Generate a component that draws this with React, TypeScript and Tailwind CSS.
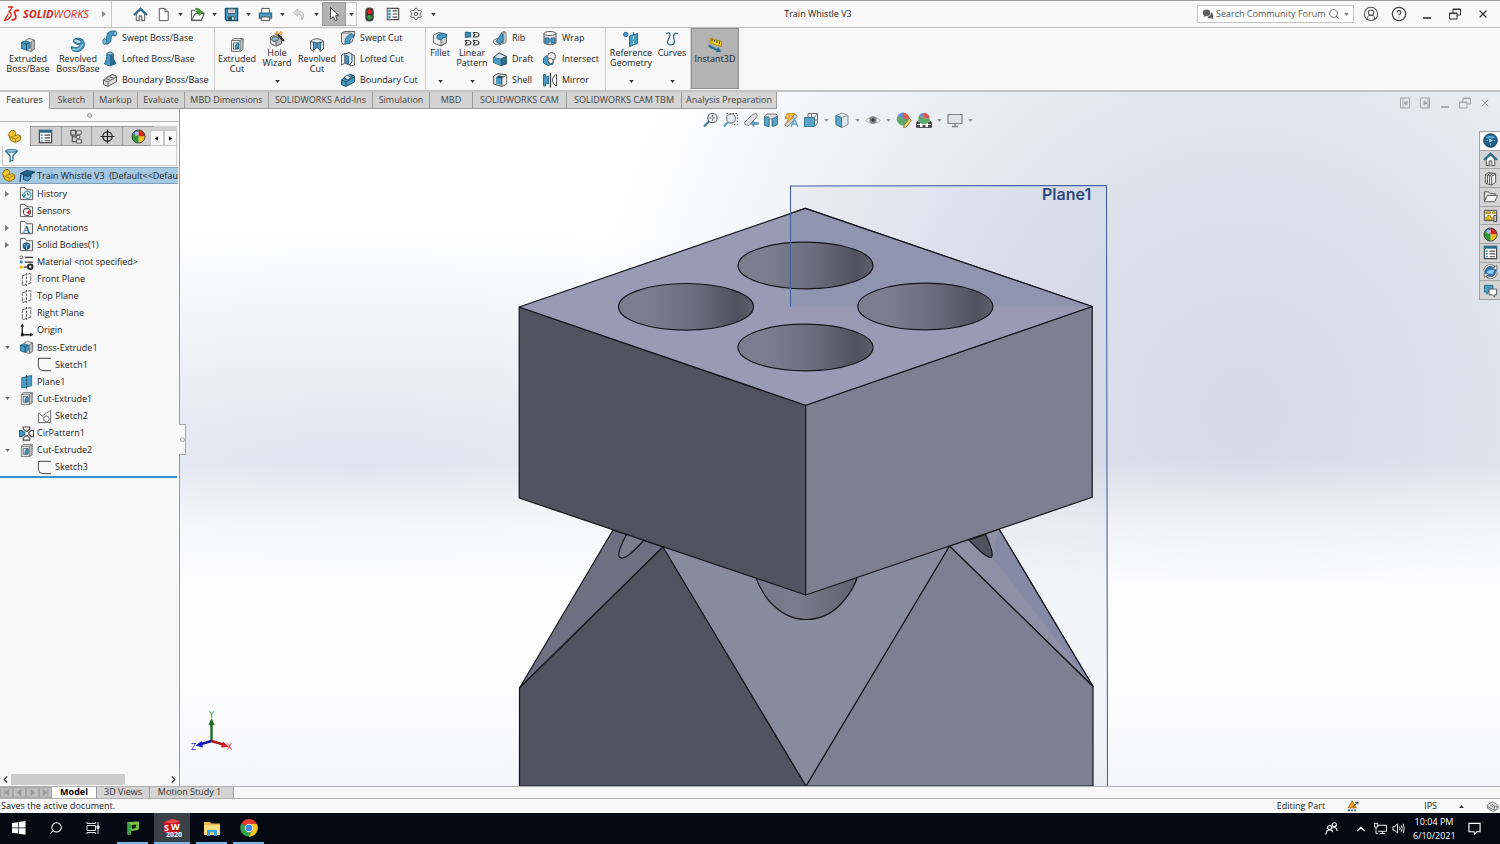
import type { ReactNode } from "react";
import { ChevronLeft, ChevronRight, ChevronUp, CircleHelp, CircleUserRound, Search, Settings, X } from "lucide-react";

const blue = "#4a9cc4";
const deep = "#2a6c8f";
const ink = "#4a4a4a";

/* 16x16 drawings shared by the ribbon, the tree and the toolbars */
const icons: Record<string, ReactNode> = {
  home: (
    <>
      <path d="M3.500 7.500V14.500H12.500V7.500L8 3Z" fill="#fff" stroke={ink} />
      <path d="M6.500 14.500V9.500H9.500V14.500" fill="#ddd" stroke={ink} />
      <path d="M1 8.500L8 2L15 8.500" fill="none" stroke={deep} strokeWidth="2.400" />
    </>
  ),
  page: <path d="M3.500 1.500H9.500L13 5V14.500H3.500ZM9.500 1.500V5H13" fill="#fff" stroke="#555" />,
  open: (
    <>
      <path d="M1.500 14V3.500H5L6.500 5H12V7L15 6L12 14.500H1.500Z" fill="#eee" stroke={ink} />
      <path d="M2 14L5.500 7H15L12 14Z" fill="#fff" stroke={ink} />
      <path d="M6 1.500Q11 1 11.500 5H14L10.300 9L7 5H9Q9 3 6 3Z" fill="#43a52b" stroke="#2b7a1b" strokeWidth=".6" />
    </>
  ),
  save: (
    <>
      <path d="M1.500 1.500H14.500V14.500H3L1.500 13Z" fill={blue} stroke="#1d4f69" strokeWidth="1.400" />
      <path d="M4 2H12V7H4Z" fill="#f0f4f6" stroke="#456" />
      <path d="M5.500 3.500H10.500M5.500 5.300H10.500" stroke="#888" strokeWidth=".8" />
      <path d="M4.500 10H11.500V14H4.500Z" fill="#355" />
      <path d="M8.500 11H10.500V13.500H8.500Z" fill="#fff" />
    </>
  ),
  print: (
    <>
      <path d="M4 7V1.500H12V7" fill="#fff" stroke={ink} />
      <path d="M1.500 6.500H14.500V12H1.500Z" fill={blue} stroke={deep} strokeWidth="1.300" />
      <path d="M3.500 10.500H12.500V14.500H3.500Z" fill="#eee" stroke={ink} />
    </>
  ),
  undo: <path d="M6 2L2 6L6 10V7.500Q11 6.500 10.500 14Q16 5 6 4.500Z" fill="#ddd" stroke="#b4b4b4" />,
  cursor: <path d="M4.500 1.500V13L7.300 10.500L9.300 14.800L11.300 14L9.500 9.700H13Z" fill="#fff" stroke="#444" />,
  traffic: (
    <>
      <rect x="4" y="1" width="8" height="14" rx="3" fill="#333" stroke="#555" />
      <circle cx="8" cy="5" r="2.600" fill="#e5231b" />
      <circle cx="8" cy="11" r="2.600" fill="#2f9e37" />
    </>
  ),
  list: (
    <>
      <path d="M1.500 1.500H14.500V14.500H1.500Z" fill="#fff" stroke={ink} strokeWidth="1.300" />
      <path d="M2 2H6V14H2Z" fill="#b9d8e6" />
      <path d="M3 4.500H5M3 8H5M3 11.500H5" stroke={deep} strokeWidth="1.800" />
      <path d="M7.500 4.500H13M7.500 8H13M7.500 11.500H13" stroke={ink} strokeWidth="1.300" />
    </>
  ),
  props: (
    <>
      <path d="M1.500 1.500H14.500V14.500H1.500Z" fill="#fff" stroke={ink} strokeWidth="1.300" />
      <path d="M1 1H15V4H1Z" fill={deep} />
      <path d="M3 6.500H5M3 9.500H5M3 12.500H5" stroke={blue} strokeWidth="1.800" />
      <path d="M7 6.500H13M7 9.500H13M7 12.500H13" stroke={ink} strokeWidth="1.200" />
    </>
  ),
  extrude: (
    <>
      <path d="M6 3L9 1.500L14.500 3V12L11 14.500L6 13Z" fill="#eee" stroke="#777" />
      <path d="M11 5V14L14.500 12V3Z" fill="#bbb" stroke="#777" />
      <path d="M1.500 5.500L5 4L10 5.500V11L6.500 13L1.500 11.500Z" fill={blue} stroke={deep} />
      <path d="M1.500 5.500L6.500 7L10 5.500M6.500 7V13" fill="none" stroke="#1d516b" />
    </>
  ),
  revolve: (
    <>
      <path d="M4 2.500Q8 -.5 12.500 2.500Q16 7 13 11.500Q9 16 3.500 14Q.5 12.500 1.500 9.500Q7 12 9.500 9Q9.500 7 6 7Q2 5.500 4 2.500Z" fill={blue} stroke={deep} />
      <ellipse cx="7.500" cy="4.300" rx="3.800" ry="1.900" fill="#b8dceb" stroke={deep} transform="rotate(15 7.500 4.300)" />
      <path d="M2.500 12Q9 14.500 12.500 7.500" stroke="#b8dceb" fill="none" />
    </>
  ),
  sweep: (
    <>
      <path d="M2.500 11.500Q7 13 7 7.500Q7 2.500 13 3.500" fill="none" stroke={deep} strokeWidth="5.500" />
      <path d="M2.500 11.500Q7 13 7 7.500Q7 2.500 13 3.500" fill="none" stroke={blue} strokeWidth="3.800" />
      <ellipse cx="2.600" cy="11.500" rx="1.800" ry="2.800" fill="#8ac4de" stroke={deep} />
      <ellipse cx="13" cy="3.500" rx="1.600" ry="2.500" fill="#8ac4de" stroke={deep} />
    </>
  ),
  loft: (
    <>
      <path d="M5 2.500L4.500 8L2.500 13L8 15L14 12.500L11.500 8L11 2.500Z" fill={blue} stroke={deep} />
      <path d="M8 4V15L14 12.500L11.500 8L11 2.500Z" fill={deep} />
      <ellipse cx="8" cy="2.600" rx="3" ry="1.400" fill="#a8d3e5" stroke={deep} />
    </>
  ),
  boundary: (
    <>
      <path d="M1.500 8L10 2.500L14.500 4V9.500L6 14.500L1.500 12.500Z" fill="#ddd" stroke="#555" />
      <path d="M1.500 8L6 10L14.500 4.500M6 10V14.500M4 6.500L9 8.500M7 4.500L12 6.500" fill="none" stroke="#666" />
      <path d="M3 7.500Q7 2 9 5.500T14 4.500" fill="none" stroke="#777" />
    </>
  ),
  cut: (
    <>
      <path d="M2.500 3.500L5 1.500H14L13 13L10.500 14.500H2.500Z" fill="#e8e8e8" stroke="#777" />
      <path d="M11 3.500V14.500L14 12.500V1.500ZM2.500 3.500H11" fill="#bbb" stroke="#777" />
      <path d="M4.500 6H9.500V12H4.500Z" fill="#fff" stroke="#567" />
      <path d="M6.500 8L9.500 6V11L6.500 12Z" fill={blue} stroke={deep} />
    </>
  ),
  wizard: (
    <>
      <path d="M1.500 6L7 3.500L12.500 5.500V12.500L7 15.200L1.500 12.500Z" fill="#e2e2e2" stroke="#666" />
      <path d="M7 8V15L12.500 12.500V5.500Z" fill="#bbb" stroke="#666" />
      <ellipse cx="6" cy="8" rx="3.400" ry="2.400" fill="#89b7ce" stroke="#555" />
      <path d="M8 3L15 10" stroke="#222" strokeWidth="1.800" />
      <path d="M8 0V5M5.500 2.500H10.500M12 0V4M10 2H14" stroke="#f0902c" strokeWidth="1.200" />
    </>
  ),
  revcut: (
    <>
      <path d="M1.500 4Q8 -.5 14.500 4V12L11 14.500V9H5V14.500L1.500 12Z" fill="#e4e4e4" stroke="#666" />
      <path d="M4.500 5L8 6L11.500 5V13L8 10.500L4.500 13Z" fill={blue} stroke={deep} />
      <path d="M8 6V11M2 4.500L5 6M14 4.500L11 6" stroke="#456" />
    </>
  ),
  sweepcut: (
    <>
      <path d="M1.500 3L5 1.500H14.500V5L12 12L3 14.500L1.500 12Z" fill="#e4e4e4" stroke="#666" />
      <path d="M5 14Q4 6 12 3.500L14.500 6Q9 8 10 13.500Z" fill={blue} stroke={deep} />
      <path d="M2 3H11" stroke="#777" />
    </>
  ),
  loftcut: (
    <>
      <path d="M1.500 4L5 2V12L1.500 14ZM10 3L14.500 4.500V14L10 15Z" fill="#eee" stroke="#666" />
      <path d="M5 3L9 1.500L12 3V11L9 14L5 12Z" fill="#cfe1e9" stroke="#456" />
      <path d="M6 4L8.500 5.500V13L6 11.500Z" fill={blue} stroke={deep} />
    </>
  ),
  boundcut: (
    <>
      <path d="M1.500 8L10 2L14.500 4V10L6 14.500L1.500 12.500Z" fill={blue} stroke="#1f546e" />
      <path d="M1.500 8L6 10L14.500 4.500M6 10V14.500M4 6.500L9 8.500" fill="none" stroke="#1f4c63" />
      <path d="M4 6Q7 1 9 4.500L13 3.500L8 8Z" fill="#d6e6ed" stroke="#456" />
    </>
  ),
  fillet: (
    <>
      <path d="M1.500 4L7 1.500L14.500 3.500V11.500L9 15L1.500 12Z" fill="#eee" stroke="#666" />
      <path d="M9 8V15L14.500 11.500V5Z" fill="#ccc" stroke="#666" />
      <path d="M5 5Q7 2.500 10 2.300L14.500 3.500V6Q10 6 9 9L5 7.500Z" fill={blue} stroke={deep} />
    </>
  ),
  pattern: (
    <>
      <path d="M1.500 1.500H4V2.500L6.500 1.500V6L4 5V6H1.500Z" fill={blue} stroke={deep} strokeWidth="1.300" />
      <path d="M9.500 1.500H12Q15 2 15 3.700T12 6H9.500V5L11 3.700L9.500 2.500ZM1.500 9.500H4Q7 10 7 11.700T4 14H1.500V13L3 11.700L1.500 10.500ZM9.500 9.500H12Q15 10 15 11.700T12 14H9.500V13L11 11.700L9.500 10.500Z" fill="#fff" stroke="#444" strokeWidth="1.200" />
    </>
  ),
  rib: (
    <>
      <path d="M1.500 10L9 7V3L12 1.500V12L5 15L1.500 13Z" fill="#ddd" stroke="#777" />
      <path d="M4 11.500L9.500 3.500L11 4V11.500L7 13.500Z" fill={blue} stroke={deep} />
      <path d="M12 1.500L14 2.500V12.500L7 15" fill="none" stroke="#777" />
    </>
  ),
  draft: (
    <>
      <path d="M1.500 6.500L7 2L14.500 5.500V13L9 14.500L1.500 11.500Z" fill={deep} stroke="#355" />
      <path d="M1.500 6.500L7 2L14.500 5.500L8.500 8Z" fill="#d6e8f0" stroke="#456" />
      <path d="M1.500 6.500L8.500 8V14.500L1.500 11.500Z" fill={blue} />
    </>
  ),
  shell: (
    <>
      <path d="M1.500 4L6 1.500L14.500 3V12L10 14.500L1.500 12Z" fill="#ddd" stroke="#555" />
      <path d="M4 5.500L7 3.500L12.500 4.500V13L4 11Z" fill="#1d5470" />
      <path d="M4 5.500L9 6.500V13L4 11.500Z" fill={blue} />
      <path d="M10 6V14.500L14.500 12V3Z" fill="#eee" stroke="#777" />
    </>
  ),
  wrap: (
    <>
      <path d="M2 3.500V13Q8 16.500 14 13V3.500Z" fill="#e5e5e5" stroke="#555" />
      <ellipse cx="8" cy="3.500" rx="6" ry="2" fill="#fff" stroke="#555" />
      <path d="M3 8H7V13H3ZM9 8H13V13H9ZM7 10H9" fill={blue} stroke={deep} />
    </>
  ),
  intersect: (
    <>
      <path d="M1.500 7L5 4.500L11 7V13L6 14.500L1.500 12Z" fill={blue} stroke={deep} />
      <circle cx="9.500" cy="5.500" r="4" fill="#eee" stroke="#555" />
      <path d="M5.500 9L8 7L11 8.500V12L8 13Z" fill="#fff" stroke="#555" />
    </>
  ),
  mirror: (
    <>
      <path d="M1.500 2.500H3.500V5.500L6.500 4V12L3.500 10.500V14H1.500Z" fill={blue} stroke={deep} />
      <path d="M14.500 2.500L13 3L10.500 6.500V9.500L13 13.500L14.500 14Z" fill="#fff" stroke="#555" />
      <path d="M8.500 1V15.500" stroke="#333" strokeWidth="1.200" />
    </>
  ),
  geometry: (
    <>
      <circle cx="2.800" cy="3.500" r="2.200" fill={blue} stroke={deep} />
      <path d="M6.500 5L14.500 2.500V12.500L6.500 15.500Z" fill={blue} stroke={deep} />
      <path d="M10.500 1V15.500" stroke="#fff" strokeDasharray="3 1.500" />
      <path d="M10.500 1V4" stroke={ink} />
    </>
  ),
  curves: <path d="M2 2.500Q6 .5 6 4Q6 6 4.500 8Q2 12.500 5.500 13.700Q12 14.500 10 8Q8 1.500 14 2.500" fill="none" stroke={deep} strokeWidth="1.300" />,
  instant: (
    <>
      <path d="M3 1L14.500 4.500V9.500L3 6Z" fill="#f5cf2f" stroke="#a98a14" />
      <path d="M5 2V4.500M7.500 3V5M10 3.500V6M12.500 4.500V7" stroke="#333" />
      <path d="M1.500 8.500L10 13" stroke={deep} strokeWidth="2.200" />
      <path d="M9 15.500L14.500 14.500L11 10Z" fill={deep} />
    </>
  ),
  part: (
    <>
      <path d="M1.500 6L4 2L7.500 1.500L9.500 4L8.500 7L11.500 6L14.500 7.500V11.500L9 14.500L4 12Z" fill="#f5c52d" stroke="#8a6a10" />
      <path d="M4 12V9L1.500 6M4 9L8.500 7M9 14.500V10.500L14.500 7.500M4 9L9 10.500" fill="none" stroke="#a88218" />
    </>
  ),
  config: (
    <>
      <path d="M2 1.500H7V6.500H2ZM3.500 6.500V13.500H8M3.500 8.500H8" fill="none" stroke="#555" strokeWidth="1.300" />
      <path d="M8 2H13V5.500H8ZM8 7H11.500V10H8ZM8 11.500H13.500V15H8Z" fill="#eee" stroke="#555" />
    </>
  ),
  target: (
    <>
      <circle cx="8" cy="8" r="5" fill="none" stroke="#222" strokeWidth="1.300" />
      <path d="M8 .5V15.500M.5 8H15.500" stroke="#222" strokeWidth="1.300" />
    </>
  ),
  ball: (
    <>
      <path d="M8 8L2 4.500A7 7 0 0 1 8 1Z" fill="#2a5fc4" />
      <path d="M8 8V1A7 7 0 0 1 15 8Z" fill="#d9261c" />
      <path d="M8 8H15A7 7 0 0 1 8 15Z" fill="#f3c413" />
      <path d="M8 8V15A7 7 0 0 1 2 4.500Z" fill="#2b9a36" />
      <circle cx="8" cy="8" r="7" fill="none" stroke="#444" />
      <circle cx="6" cy="5" r="2.300" fill="#fff" opacity=".6" />
    </>
  ),
  filter: (
    <>
      <path d="M2 3.500L6.500 8.500V14.500L9.500 13V8.500L14 3.500Z" fill="#eee" stroke={deep} strokeWidth="1.300" />
      <ellipse cx="8" cy="3" rx="6.200" ry="1.500" fill="#9ccbe0" stroke={deep} />
    </>
  ),
  cap: (
    <>
      <path d="M1 5.500L8 2.500L16 4L9.500 8Z" fill="#24668a" stroke="#174660" />
      <path d="M4.500 7.500V11.500L8.500 13L12 10V6.500L9.500 8.500Z" fill={blue} stroke="#174660" />
      <path d="M2 6.500L1 14" stroke="#174660" strokeWidth="1.300" />
    </>
  ),
  history: (
    <>
      <path d="M1.500 14.500V1.500H6.500L8 4H14.500V14.500Z" fill="#f4f4f4" stroke="#555" />
      <circle cx="9" cy="9.500" r="3.700" fill="#fff" stroke={blue} strokeWidth="1.300" />
      <path d="M9 7V9.500H11M3 9L5 11.500L7 9" fill="none" stroke={deep} strokeWidth="1.200" />
    </>
  ),
  sensors: (
    <>
      <path d="M1.500 14.500V1.500H6.500L8 4H14.500V14.500Z" fill="#f4f4f4" stroke="#555" />
      <circle cx="8.500" cy="9.500" r="3.800" fill="#fff" stroke="#444" strokeWidth="1.200" />
      <path d="M7.500 10.500L11.500 7V12Z" fill="#d3331e" />
    </>
  ),
  annotations: (
    <>
      <path d="M1.500 14.500V1.500H6.500L8 4H14.500V14.500Z" fill="#f4f4f4" stroke="#555" />
      <text x="8" y="14" fontSize="11" fontWeight="700" textAnchor="middle" fill={deep} className="font-['Liberation_Serif',serif]">A</text>
    </>
  ),
  bodies: (
    <>
      <path d="M1.500 14.500V1.500H6.500L8 4H14.500V14.500Z" fill="#f4f4f4" stroke="#555" />
      <path d="M4.500 7.500L8 6L11.500 7.500V11.500L8 13.500L4.500 11.500Z" fill={deep} stroke="#174660" />
      <path d="M4.500 7.500L8 9L11.500 7.500M8 9V13" fill="none" stroke="#9ccbe0" strokeWidth=".8" />
    </>
  ),
  material: (
    <>
      <circle cx="2.500" cy="2.500" r="1.500" fill="#fff" stroke="#666" />
      <circle cx="2.500" cy="7.500" r="1.800" fill={blue} />
      <circle cx="2.500" cy="13" r="1.800" fill="#efb91c" />
      <path d="M6 2.500H15M6 7.500H15M5 13H9" stroke="#333" strokeWidth="1.400" />
      <circle cx="12" cy="12.500" r="2.400" fill="none" stroke="#222" strokeWidth="2" />
    </>
  ),
  plane: (
    <>
      <path d="M3.500 4L12.500 1.500V12L3.500 14.500Z" fill="none" stroke="#666" strokeDasharray="5 1" />
      <path d="M8 1V15" stroke="#555" strokeDasharray="2.500 1.500" />
    </>
  ),
  origin: (
    <>
      <path d="M3.500 3V12.500H13" fill="none" stroke="#222" strokeWidth="1.400" />
      <path d="M3.500 .5L1.500 4H5.500ZM15.500 12.500L12 10.500V14.500ZM2 11H5V14H2Z" fill="#222" />
    </>
  ),
  sketch: <path d="M15 1.500H1.500V9Q1.500 14.500 7 14.500H15" fill="none" stroke="#666" strokeWidth="1.200" />,
  sketchshape: (
    <>
      <path d="M1.500 14.500V4L5.500 7.500L14.500 1.500V14.500Z" fill="none" stroke="#666" />
      <circle cx="10" cy="10.500" r="3" fill="#f8f8f8" stroke="#666" />
    </>
  ),
  plane1: (
    <>
      <path d="M3 4L13.500 1.500V12.500L3 15Z" fill={blue} stroke={deep} />
      <path d="M8 1V15.500" stroke="#174660" strokeDasharray="3 1" />
    </>
  ),
  cirpattern: (
    <>
      <path d="M.5 5H3L6 7V9L3 11H.5Z" fill={blue} stroke={deep} strokeWidth="1.300" />
      <path d="M4.500 1H11.500V3L9 5.500H7L4.500 3ZM15.500 4.500V11.500H13.500L10.500 9V7L13.500 4.500ZM4.500 15V13L7 10.500H9L11.500 13V15Z" fill="#fff" stroke="#444" strokeWidth="1.200" />
    </>
  ),
  zoomfit: (
    <>
      <circle cx="9.500" cy="6" r="4.700" fill="#eef3f6" stroke="#666" strokeWidth="1.300" />
      <path d="M6 9.500L1 14.500" stroke={deep} strokeWidth="2.200" />
      <path d="M9.500 3V9M6.500 6H12.500" stroke="#555" strokeDasharray="2 1.500" />
    </>
  ),
  zoomarea: (
    <>
      <path d="M3.500 1.500H14.500V12.500H9" fill="none" stroke="#555" strokeDasharray="1.600 1.400" />
      <circle cx="8" cy="6.500" r="4.500" fill="#dfeaf0" stroke="#888" strokeWidth="1.300" />
      <path d="M5 10L1 14.500" stroke={blue} strokeWidth="2.200" />
    </>
  ),
  prevview: (
    <>
      <path d="M9 3L13 1L14.500 4L6 13.500L2 12.500L1.500 10.500Z" fill="#ddd" stroke="#777" />
      <path d="M7.500 11.500L11 8.500V10.500H15.500V12.500H11V14.500Z" fill={blue} stroke={deep} strokeWidth=".5" />
    </>
  ),
  section: (
    <>
      <path d="M1.500 4L4 2H13L14.500 3.500V12L11 14H9V7H6V14.500L1.500 13Z" fill="#ddd" stroke="#666" />
      <path d="M1.500 5H6V14.500L1.500 13.500ZM9.500 6.500L14.500 4.500V12.500L9.500 14.500Z" fill={blue} stroke={deep} />
    </>
  ),
  dynamic: (
    <>
      <path d="M12 2L14.500 4L5 14.500L1.500 13Z" fill="#ccc" stroke="#777" />
      <path d="M4 1.500H12L8.500 5H11L3 11L5.500 6.500H2Z" fill="#f5b041" stroke="#b9710f" strokeWidth=".7" />
      <path d="M8 15L11.500 7L15 15M9 12H14" fill="none" stroke={blue} strokeWidth="1.400" />
    </>
  ),
  orient: (
    <>
      <path d="M5 5V1.500H14.500V11L11.500 14.500" fill="#eee" stroke="#666" />
      <path d="M1.500 5.500H11.500V14.500H1.500Z" fill={blue} stroke={deep} />
      <path d="M11.500 5.500L14.500 1.500M8.500 1.500V5M11.500 8H14.500" stroke="#666" />
    </>
  ),
  display: (
    <>
      <path d="M2 3.500L8 1L14 3.500V12.500L8 15.500L2 12.500Z" fill="#d8e8ef" stroke="#888" />
      <path d="M2 3.500L7.500 5.500V15.200L2 12.500Z" fill={blue} stroke={deep} />
      <path d="M7.500 5.500L14 3.500" stroke="#888" />
    </>
  ),
  eye: (
    <>
      <path d="M.5 8.500Q8 1.500 15.500 8.500Q8 14 .5 8.500Z" fill="#f5f5f5" stroke="#aaa" />
      <circle cx="8" cy="8" r="3.700" fill="#777" />
      <circle cx="8" cy="8" r="1.700" fill="#222" />
    </>
  ),
  pencilball: (
    <>
      <path d="M7 7L1.500 4A6.500 6.500 0 0 1 7 .5Z" fill="#5b86c9" />
      <path d="M7 7V.5A6.500 6.500 0 0 1 13.500 7Z" fill="#d94b45" />
      <path d="M7 7V13.500A6.500 6.500 0 0 1 1.500 4ZM7 7H13.500A6.500 6.500 0 0 1 7 13.500Z" fill="#4ba255" />
      <path d="M8 13.500L13.500 6.500L15.500 8.500L10 15L7.500 15.500Z" fill="#f1cf58" stroke="#75612a" strokeWidth=".8" />
    </>
  ),
  scene: (
    <>
      <path d="M.5 15.500V10L4 8H12L15.500 10V15.500Z" fill="#fff" stroke="#444" />
      <path d="M1 13H4V15H1ZM6.500 13H9.500V15H6.500ZM12 13H15V15H12ZM1 10H4V12H1ZM12 10H15V12H12Z" fill="#333" />
      <path d="M8 6.500L3 3.500A5.800 5.800 0 0 1 8 .7Z" fill="#5b86c9" />
      <path d="M8 6.500V.7A5.800 5.800 0 0 1 13.800 6.500Z" fill="#d94b45" />
      <path d="M8 6.500H13.800A5.800 5.800 0 0 1 8 12.300A5.800 5.800 0 0 1 3 3.500Z" fill="#4ba255" />
    </>
  ),
  monitor: (
    <>
      <path d="M1 2.500H15V11.500H1Z" fill="#dfe4e8" stroke="#777" strokeWidth="1.200" />
      <path d="M8 11.500V14M5 14.500H11" stroke="#777" strokeWidth="1.300" />
    </>
  ),
  globe: (
    <>
      <circle cx="8" cy="8" r="7.300" fill="#1f5f8b" stroke="#173f5c" />
      <path d="M2.500 5Q8 .5 13.500 5Q8 7 2.500 5Z" fill="#5ba3cf" />
      <path d="M7 6.500L10 8L7 9.500ZM3.500 8H5M11.500 8H13M8 11V13" fill="#bfe0f2" stroke="#bfe0f2" strokeWidth=".8" />
    </>
  ),
  library: (
    <>
      <path d="M2.500 4L6 1.500L13.500 3V12L9 15L2.500 13Z" fill="#eee" stroke="#555" />
      <path d="M4.800 5V13.500M7 5.500V14.500M9.200 5.500V15M2.500 4L9.200 5.500L13.500 3M4.800 4.500L8.500 2M7 5L11 2.500" fill="none" stroke="#555" />
    </>
  ),
  openfolder: (
    <>
      <path d="M1.500 13.500V3H6L7.500 5H13V7" fill="#ddd" stroke="#555" />
      <path d="M1.500 13.500L4.500 7H15.500L12.500 13.500Z" fill="#fff" stroke="#555" />
    </>
  ),
  palette: (
    <>
      <path d="M1.500 2.500H14.500V13.500H1.500Z" fill="#fff" stroke="#444" />
      <path d="M3 4H8V6H3ZM10 4H13V6H10ZM5 8H8V10H10V12.500H3V10H5Z" fill="#f2bf16" stroke="#7d6207" strokeWidth=".7" />
      <path d="M11.500 8H14.500V14.500H11.500Z" fill="#ccc" stroke="#444" />
    </>
  ),
  recycle: (
    <>
      <circle cx="8" cy="8" r="6" fill="#2d78bd" stroke="#1a4c7c" />
      <path d="M4 8Q9 5 12 7L10 11Q7 9 5 11Z" fill="#8fcdf0" />
      <path d="M1.500 7Q3 1.500 8 1.500Q11 1.500 12.500 4M14.500 9Q13 14.500 8 14.500Q5 14.500 3.500 12" fill="none" stroke="#555" strokeWidth="2.600" />
      <path d="M1.500 7Q3 1.500 8 1.500Q11 1.500 12.500 4M14.500 9Q13 14.500 8 14.500Q5 14.500 3.500 12" fill="none" stroke="#eee" strokeWidth="1.200" />
      <path d="M10 5L15 6L14.500 1.500ZM6 11L1 10L1.500 14.500Z" fill="#eee" stroke="#555" strokeWidth=".8" />
    </>
  ),
  forum: (
    <>
      <path d="M1.500 2.500H10.500V9.500H6L4 12V9.500H1.500Z" fill={blue} stroke={deep} />
      <path d="M6.500 6.500H14.500V12.500H12.500V15L10 12.500H6.500Z" fill="#fff" stroke="#555" />
    </>
  ),
  chat: (
    <>
      <path d="M1 7Q1 2 6 2T11 6.500T6 10.500L2 12L3 10Q1 9 1 7Z" fill="#5f5f5f" />
      <path d="M12 5.500Q15.500 7 15 10L14.500 12L15.500 14.500L12 13.500Q8 14 7 11.500Q12 11 12 5.500Z" fill="#5f5f5f" />
    </>
  ),
  warn: (
    <>
      <path d="M7 1L12.500 10.500H1.500Z" fill="#f0a31c" stroke="#8a5a0a" />
      <path d="M8 9L14 3M11 3H14.500V6" fill="none" stroke="#222" strokeWidth="1.300" />
      <path d="M1 12.500H4V15H1ZM5.500 12.500H8V15H5.500ZM9.500 12.500H12V15H9.500Z" fill={deep} />
    </>
  ),
  tag: (
    <>
      <path d="M1.500 6L8 2L14.500 6.500L15 10L9 14.500L2 10Z" fill="#ddd" stroke="#666" />
      <path d="M5 6L9 9M7 5L11 8M2 8L9 12L14.500 8" fill="none" stroke="#666" />
      <circle cx="12" cy="10" r="2" fill="#eee" stroke="#666" />
    </>
  ),
};

function Icon({ name, className = "size-4" }: { name: string; className?: string }) {
  return (
    <svg viewBox="0 0 16 16" className={`shrink-0 ${className}`} aria-hidden="true">
      {icons[name]}
    </svg>
  );
}

function Caret({ className = "text-[#333]" }: { className?: string }) {
  return (
    <svg viewBox="0 0 6 4" className={`h-[3px] w-[5px] shrink-0 ${className}`} aria-hidden="true">
      <path d="M0 0H6L3 4Z" fill="currentColor" />
    </svg>
  );
}

function DropButton({ label, className = "w-3" }: { label: string; className?: string }) {
  return (
    <button aria-label={label} className={`flex h-5 items-center justify-center ${className}`}>
      <Caret />
    </button>
  );
}

const quickTools = [
  { name: "page", label: "New" },
  { name: "open", label: "Open" },
  { name: "save", label: "Save" },
  { name: "print", label: "Print" },
  { name: "undo", label: "Undo" },
];

function TitleBar() {
  return (
    <header className="flex h-7 items-center border-y border-t-[#9d9d9d] border-b-[#bdbdbd] bg-[#f8f8f8]">
      <div className="flex h-full w-28 items-center border-r border-[#c8c8c8] pl-1">
        <svg viewBox="0 0 16 16" className="h-4 w-4 text-[#da291c]" fill="none" stroke="currentColor" strokeWidth="1.300" aria-hidden="true">
          <path d="M4 1H8.500L5 6Q8.500 7 6.500 10.500Q4.500 14 .5 14.500L4.500 7.500" />
          <path d="M15 4.500H12Q9.500 5.500 11 8T11.500 12.500Q10.500 14 7.500 14" strokeWidth="1.800" />
        </svg>
        <span className="pl-[3px] text-[11px] text-[#da291c] italic">
          <b>SOLID</b>WORKS
        </span>
        <span className="ml-auto pr-[5px]">
          <svg viewBox="0 0 4 6" className="h-[6px] w-1" aria-hidden="true">
            <path d="M0 0L4 3L0 6Z" fill="#888" />
          </svg>
        </span>
      </div>
      <nav className="flex items-center pl-4" aria-label="Quick access">
        <button aria-label="Home" className="flex w-6 justify-center">
          <Icon name="home" className="size-[15px]" />
        </button>
        {quickTools.map((tool) => (
          <div key={tool.name} className="flex items-center">
            <button aria-label={tool.label} className="flex w-[22px] justify-center">
              <Icon name={tool.name} className="size-[15px]" />
            </button>
            <DropButton label={`${tool.label} options`} />
          </div>
        ))}
        <button aria-label="Select" className="flex h-6 w-6 items-center justify-center border border-[#999] bg-[#b3b3b3]">
          <Icon name="cursor" />
        </button>
        <DropButton label="Select options" className="h-6 w-[11px] border border-l-0 border-[#c5c5c5]" />
        <button aria-label="Rebuild" className="flex w-6 justify-center">
          <Icon name="traffic" className="size-[15px]" />
        </button>
        <button aria-label="File properties" className="flex w-6 justify-center">
          <Icon name="list" className="size-[14px]" />
        </button>
        <button aria-label="Options" className="flex w-[22px] justify-center text-[#555]">
          <Settings size={14} strokeWidth={1.6} />
        </button>
        <DropButton label="Options menu" />
      </nav>
      <h1 className="flex-1 text-center text-[9px] text-[#222]">Train Whistle V3</h1>
      <div className="flex items-center">
        <div className="flex h-[18px] w-[157px] items-center border border-[#c4c4c4] bg-white px-1">
          <Icon name="chat" className="size-3" />
          <input
            aria-label="Search Community Forum"
            placeholder="Search Community Forum"
            className="ml-[2px] min-w-0 flex-1 text-[9px] outline-none placeholder:text-[#555]"
          />
          <Search size={12} className="mr-1 text-[#777]" />
          <Caret className="text-[#777]" />
        </div>
        <button aria-label="Account" className="ml-[9px] w-4 text-[#555]">
          <CircleUserRound size={16} strokeWidth={1.6} />
        </button>
        <button aria-label="Help" className="ml-3 w-4 text-[#444]">
          <CircleHelp size={16} strokeWidth={1.8} />
        </button>
        <WindowButtons className="gap-4 pr-[11px] pl-[14px] text-[#333]" closeWeight={2.4} />
      </div>
    </header>
  );
}

function WindowButtons({ className, closeWeight }: { className: string; closeWeight: number }) {
  return (
    <div className={`flex items-center ${className}`}>
      <button aria-label="Minimize">
        <svg viewBox="0 0 12 12" className="size-3" aria-hidden="true">
          <path d="M2 10H10" stroke="currentColor" strokeWidth="1.600" />
        </svg>
      </button>
      <button aria-label="Restore">
        <svg viewBox="0 0 12 12" className="size-3" fill="none" stroke="currentColor" aria-hidden="true">
          <path d="M.5 5H8V11H.5ZM4 5V1H11.500V7H8M.5 5.600H8M4 1.600H11.500" />
        </svg>
      </button>
      <button aria-label="Close">
        <X size={12} strokeWidth={closeWeight} />
      </button>
    </div>
  );
}

function BigTool({ icon, lines, drop, className }: { icon: string; lines: string[]; drop?: boolean; className: string }) {
  return (
    <button className={`flex flex-col items-center ${drop ? "pt-[3px]" : "pt-[9px]"} ${className}`}>
      <Icon name={icon} />
      <span className="mt-px block leading-[10px] whitespace-nowrap">
        {lines.map((line) => (
          <span key={line} className="block">
            {line}
          </span>
        ))}
      </span>
      {drop && (
        <span className="mt-auto pb-[7px]">
          <Caret />
        </span>
      )}
    </button>
  );
}

function ToolStack({ tools, className = "" }: { tools: [string, string][]; className?: string }) {
  return (
    <div className={`grid grid-rows-3 ${className}`}>
      {tools.map(([icon, label]) => (
        <button key={label} className="flex items-center gap-1 whitespace-nowrap">
          <Icon name={icon} />
          {label}
        </button>
      ))}
    </div>
  );
}

function Ribbon() {
  return (
    <section aria-label="Features ribbon" className="flex h-16 items-stretch border-b-2 border-[#c3c3c3] bg-[#f8f8f8] text-[#222]">
      <div className="flex w-[215px] border-r border-[#cfcfcf] pl-[2px]">
        <BigTool icon="extrude" lines={["Extruded", "Boss/Base"]} className="w-[52px]" />
        <BigTool icon="revolve" lines={["Revolved", "Boss/Base"]} className="w-12" />
        <ToolStack
          tools={[
            ["sweep", "Swept Boss/Base"],
            ["loft", "Lofted Boss/Base"],
            ["boundary", "Boundary Boss/Base"],
          ]}
        />
      </div>
      <div className="flex w-[211px] border-r border-[#cfcfcf] pl-[2px]">
        <BigTool icon="cut" lines={["Extruded", "Cut"]} className="w-10" />
        <BigTool icon="wizard" lines={["Hole", "Wizard"]} drop className="w-10" />
        <BigTool icon="revcut" lines={["Revolved", "Cut"]} className="w-10" />
        <ToolStack
          tools={[
            ["sweepcut", "Swept Cut"],
            ["loftcut", "Lofted Cut"],
            ["boundcut", "Boundary Cut"],
          ]}
          className="pl-[3px]"
        />
      </div>
      <div className="flex w-[180px] border-r border-[#cfcfcf]">
        <BigTool icon="fillet" lines={["Fillet"]} drop className="w-[28px]" />
        <BigTool icon="pattern" lines={["Linear", "Pattern"]} drop className="w-9" />
        <ToolStack
          tools={[
            ["rib", "Rib"],
            ["draft", "Draft"],
            ["shell", "Shell"],
          ]}
          className="w-[50px] pl-[2px]"
        />
        <ToolStack
          tools={[
            ["wrap", "Wrap"],
            ["intersect", "Intersect"],
            ["mirror", "Mirror"],
          ]}
          className="pl-[2px]"
        />
      </div>
      <div className="flex w-[85px] border-r border-[#cfcfcf]">
        <BigTool icon="geometry" lines={["Reference", "Geometry"]} drop className="w-[50px]" />
        <BigTool icon="curves" lines={["Curves"]} drop className="w-8" />
      </div>
      <div className="mb-px flex bg-[#b3b3b3] inset-ring inset-ring-[#8d8d8d]">
        <BigTool icon="instant" lines={["Instant3D"]} className="w-12" />
      </div>
    </section>
  );
}

const ribbonTabs = [
  { label: "Features", width: "w-[50px]" },
  { label: "Sketch", width: "w-[44px]" },
  { label: "Markup", width: "w-[44px]" },
  { label: "Evaluate", width: "w-[47px]" },
  { label: "MBD Dimensions", width: "w-[84px]" },
  { label: "SOLIDWORKS Add-Ins", width: "w-[104px]" },
  { label: "Simulation", width: "w-[57px]" },
  { label: "MBD", width: "w-[43px]" },
  { label: "SOLIDWORKS CAM", width: "w-[94px]" },
  { label: "SOLIDWORKS CAM TBM", width: "w-[115px]" },
  { label: "Analysis Preparation", width: "w-[95px]" },
];

function RibbonTabs() {
  return (
    <div className="flex h-[17px] items-start">
      <div role="tablist" className="flex h-full">
        {ribbonTabs.map((tab, i) => (
          <button
            key={tab.label}
            role="tab"
            aria-selected={i === 0}
            className={`border-r border-b border-[#9b9b9b] whitespace-nowrap ${tab.width} ${
              i === 0 ? "border-b-[#f8f8f8] bg-[#f8f8f8] text-[#222]" : "bg-[#d4d4d4] text-[#444]"
            }`}
          >
            {tab.label}
          </button>
        ))}
      </div>
      <div className="ml-auto flex gap-2 pt-[5px] text-[#a3a3a8]">
        <button aria-label="Collapse pane">
          <svg viewBox="0 0 12 12" className="size-3" stroke="currentColor" fill="none" aria-hidden="true">
            <path d="M1.500 1H10.500V11H1.500ZM4 1V11" />
            <path d="M8 4L5 6L8 8Z" fill="currentColor" />
          </svg>
        </button>
        <button aria-label="Expand pane">
          <svg viewBox="0 0 12 12" className="size-3" stroke="currentColor" fill="none" aria-hidden="true">
            <path d="M1.500 1H10.500V11H1.500ZM9 1V11" />
            <path d="M5 4L8 6L5 8Z" fill="currentColor" />
          </svg>
        </button>
        <WindowButtons className="gap-2 pr-[9px]" closeWeight={2} />
      </div>
    </div>
  );
}

type TreeNode = { icon: string; label: string; arrow?: "closed" | "open"; child?: boolean };

const treeNodes: TreeNode[] = [
  { icon: "history", label: "History", arrow: "closed" },
  { icon: "sensors", label: "Sensors" },
  { icon: "annotations", label: "Annotations", arrow: "closed" },
  { icon: "bodies", label: "Solid Bodies(1)", arrow: "closed" },
  { icon: "material", label: "Material <not specified>" },
  { icon: "plane", label: "Front Plane" },
  { icon: "plane", label: "Top Plane" },
  { icon: "plane", label: "Right Plane" },
  { icon: "origin", label: "Origin" },
  { icon: "extrude", label: "Boss-Extrude1", arrow: "open" },
  { icon: "sketch", label: "Sketch1", child: true },
  { icon: "plane1", label: "Plane1" },
  { icon: "cut", label: "Cut-Extrude1", arrow: "open" },
  { icon: "sketchshape", label: "Sketch2", child: true },
  { icon: "cirpattern", label: "CirPattern1" },
  { icon: "cut", label: "Cut-Extrude2", arrow: "open" },
  { icon: "sketch", label: "Sketch3", child: true },
];

function FeatureTree() {
  return (
    <aside className="relative flex w-[180px] shrink-0 flex-col border-r border-[#999] bg-[#f8f8f8] text-[#222]">
      <div className="flex h-[13px] items-center justify-center border-b border-[#b5b5b5]">
        <span className="size-[5px] rounded-full border border-[#999] bg-[#ddd]" />
      </div>
      <div className="mt-1 mr-[2px] flex h-5 bg-[#d0d0d0]" role="tablist">
        {["part", "props", "config", "target", "ball"].map((name, i) => (
          <button
            key={name}
            role="tab"
            aria-label={name}
            aria-selected={i === 0}
            className={`flex w-[31px] items-center justify-center border-r border-[#9b9b9b] last-of-type:border-r-0 ${
              i === 0 ? "bg-[#f8f8f8]" : "border-y"
            }`}
          >
            <Icon name={name} className="size-[15px]" />
          </button>
        ))}
        <div className="-ml-1 flex">
          <button aria-label="Previous tab" className="mt-1 flex w-[14px] items-center justify-center border border-[#c5c5c5] bg-[#f8f8f8]">
            <svg viewBox="0 0 4 6" className="h-[5px] w-[3px]" aria-hidden="true">
              <path d="M4 0V6L0 3Z" />
            </svg>
          </button>
          <button aria-label="Next tab" className="mt-1 flex w-[13px] items-center justify-center border border-[#c5c5c5] bg-[#f8f8f8]">
            <svg viewBox="0 0 4 6" className="h-[5px] w-[3px]" aria-hidden="true">
              <path d="M0 0V6L4 3Z" />
            </svg>
          </button>
        </div>
      </div>
      <div className="mx-[2px] flex h-5 items-center border border-t-0 border-[#cfcfcf] pl-px">
        <Icon name="filter" className="size-[15px]" />
      </div>
      <div className="mt-px mr-px flex h-[17px] items-center border-y border-[#7f9fb8] bg-[#a5c8e3] pl-px whitespace-pre">
        <Icon name="part" className="size-[15px]" />
        <Icon name="cap" className="ml-[3px] size-4" />
        <span className="pl-[2px]">{"Train Whistle V3  (Default<<Defau"}</span>
      </div>
      <ul className="mt-px grid h-[291px] auto-rows-fr">
        {treeNodes.map((node) => (
          <li key={node.label} className={`flex items-center ${node.child ? "pl-[37px]" : "pl-[5px]"}`}>
            {!node.child && (
              <span className="flex w-[14px] text-[#777]">
                {node.arrow === "open" && <Caret className="text-[#666]" />}
                {node.arrow === "closed" && (
                  <svg viewBox="0 0 4 6" className="h-[6px] w-1" aria-hidden="true">
                    <path d="M0 0V6L4 3Z" fill="currentColor" />
                  </svg>
                )}
              </span>
            )}
            <Icon name={node.icon} className="size-[15px]" />
            <span className="pl-[3px] whitespace-nowrap">{node.label}</span>
          </li>
        ))}
      </ul>
      <div className="mr-[2px] h-[2px] bg-[#3c8ec8]" />
      <div className="mt-auto flex h-[14px] items-center text-[#333]">
        <ChevronLeft size={11} strokeWidth={2.5} />
        <div className="h-[11px] flex-1 pr-[43px]">
          <div className="h-full bg-[#cdcdcd]" />
        </div>
        <ChevronRight size={11} strokeWidth={2.5} />
      </div>
      <span className="absolute top-[315px] -right-[7px] z-10 flex h-[31px] w-[7px] items-center justify-center border border-l-0 border-[#a6a6a6] bg-[#f8f8f8]">
        <span className="size-[5px] rounded-full border border-[#aaa]" />
      </span>
    </aside>
  );
}

const viewTools = [
  { name: "zoomfit", label: "Zoom to fit" },
  { name: "zoomarea", label: "Zoom to area" },
  { name: "prevview", label: "Previous view" },
  { name: "section", label: "Section view" },
  { name: "dynamic", label: "Dynamic annotation views" },
  { name: "orient", label: "View orientation", drop: true },
  { name: "display", label: "Display style", drop: true },
  { name: "eye", label: "Hide or show items", drop: true },
  { name: "pencilball", label: "Edit appearance" },
  { name: "scene", label: "Apply scene", drop: true },
  { name: "monitor", label: "View settings", drop: true },
];

const paneTools = ["globe", "home", "library", "openfolder", "palette", "ball", "props", "recycle", "forum"];

const holes = [
  [805.5, 265.5],
  [686, 306.8],
  [925.3, 306.5],
  [805.5, 347.5],
];

function Model() {
  return (
    <svg viewBox="180 109 1320 677" preserveAspectRatio="xMidYMin slice" className="h-full w-full" role="img" aria-label="Train whistle part">
      <defs>
        <linearGradient id="bore">
          <stop offset="0" stopColor="#7b7d8f" />
          <stop offset=".22" stopColor="#7b7e8f" />
          <stop offset=".55" stopColor="#6a6e7e" />
          <stop offset=".88" stopColor="#4f515c" />
          <stop offset="1" stopColor="#5d5f6d" />
        </linearGradient>
        <linearGradient id="neck">
          <stop offset="0" stopColor="#767889" />
          <stop offset=".4" stopColor="#7b7d8e" />
          <stop offset="1" stopColor="#5d606e" />
        </linearGradient>
      </defs>
      <path d="M790.500 186H1106.500V786H790.500Z" fill="#7f9cc4" opacity=".08" />
      <g stroke="#15161a" strokeWidth="1.200" strokeLinejoin="round">
        <path d="M613 530L519.500 688L663 547Z" fill="#6e7082" />
        <path d="M999 529L949.500 546L1093 686.500Z" fill="#8e90a5" />
        <path d="M999 529L1093 686.500L992 557Z" fill="#858aa6" stroke="none" />
        <path d="M626.500 534.600Q618 550 618.800 556Q621 561 630 554Q637 548 643.300 541" fill="#7b7d8f" />
        <path d="M969 540Q986 558 991 557.500Q995 556 985.700 534.500Z" fill="#51535f" />
        <path d="M999 529L1093 686.500" />
        <path d="M663 547L806 786H519.500V688Z" fill="#51535e" />
        <path d="M949.500 546L1093 686.500V786H806Z" fill="#7e8092" />
        <path d="M663 547L806 786L949.500 546L806 500Z" fill="#878b9e" />
        <path d="M755 575Q759 588 769 601Q786 619.500 806 619.500Q826 619.500 841 604Q854 590 858 575Z" fill="url(#neck)" />
        <path d="M519.200 307L805.700 405.300V595L519.200 498Z" fill="#51535e" />
        <path d="M1092.200 306.500L805.700 405.300V595L1092.200 497.300Z" fill="#7e8092" />
        <path d="M805.300 208.400L1092.200 306.500L805.700 405.300L519.200 307Z" fill="#989bb3" />
        <path d="M790.600 213.500L805.300 208.400L1092 306.500H790.600Z" fill="#9095af" stroke="none" />
        {holes.map(([cx, cy]) => (
          <ellipse key={`${cx}-${cy}`} cx={cx} cy={cy} rx="67.500" ry="23.300" fill="url(#bore)" />
        ))}
        <path d="M790.600 213.500L805.300 208.400L1092.200 306.500" fill="none" />
      </g>
      <path d="M790.500 306.500V186L1106.500 185.500L1107.500 786" fill="none" stroke="#4763a0" strokeWidth="1.100" />
      <text x="1042" y="200" fontSize="16" fontWeight="600" fill="#2e4782" className="font-['Inter',sans-serif]">
        Plane1
      </text>
    </svg>
  );
}

function Triad() {
  return (
    <svg viewBox="0 -8 48 52" className="absolute bottom-[33px] left-[9px] h-[52px] w-12" aria-hidden="true">
      <path d="M22.500 32V14" stroke="#1d6b23" strokeWidth="2.400" />
      <path d="M22.500 9L19.500 16H25.500Z" fill="#1d6b23" />
      <path d="M22.500 32L36 36" stroke="#b01616" strokeWidth="2.400" />
      <path d="M40 38L32 38.500L34 32.500Z" fill="#d41c1c" />
      <path d="M22.500 32L12 35" stroke="#15159a" strokeWidth="2.400" />
      <path d="M6.500 36.500L14 38.500L12.500 32Z" fill="#1a1ad0" />
      <g fontSize="9" className="font-['Open_Sans',sans-serif]">
        <text x="20" y="9" fill="#3c9b3c">Y</text>
        <text x="38" y="41" fill="#f03030">X</text>
        <text x="2" y="41" fill="#2a2af0">Z</text>
      </g>
    </svg>
  );
}

function Viewport() {
  return (
    <main className="relative min-w-0 flex-1 overflow-hidden">
      <div className="absolute inset-0">
        <Model />
      </div>
      <div className="absolute inset-x-0 top-[3px] flex justify-center pr-[4px]">
        {viewTools.map((tool) => (
          <div key={tool.name} className="flex items-center opacity-90">
            <button aria-label={tool.label} className="flex w-5 justify-center">
              <Icon name={tool.name} />
            </button>
            {tool.drop && (
              <button aria-label={`${tool.label} menu`} className="flex w-[11px] justify-center">
                <Caret className="text-[#888]" />
              </button>
            )}
          </div>
        ))}
      </div>
      <div className="absolute top-[22px] right-0 grid h-[169px] w-[21px] auto-rows-fr border-t border-l border-[#a3a3a3]">
        {paneTools.map((name, i) => (
          <button
            key={name}
            aria-label={`${name} pane`}
            className={`flex items-center justify-center border-b border-[#a3a3a3] ${i === 0 ? "bg-white" : "bg-[#d4d4d4]"}`}
          >
            <Icon name={name} className="size-[15px]" />
          </button>
        ))}
      </div>
      <Triad />
    </main>
  );
}

function BottomTabs() {
  return (
    <div className="flex h-[13px] border-y border-[#b0b0b0] bg-[#f8f8f8] text-[#333]">
      <div className="flex w-[52px] bg-[#bcbcbc]">
        {["M3 2V10M9 2V10L4 6Z", "M8 2V10L3 6Z", "M4 2V10L9 6Z", "M9 2V10M3 2V10L8 6Z"].map((d, i) => (
          <button key={d} aria-label={`Scroll tabs ${i + 1}`} className="flex w-[13px] items-center justify-center border border-[#a5a5a5]">
            <svg viewBox="0 0 12 12" className="size-[9px]" fill="#999" stroke="#999" aria-hidden="true">
              <path d={d} />
            </svg>
          </button>
        ))}
      </div>
      <div role="tablist" className="flex leading-[10px]">
        <button role="tab" aria-selected="true" className="w-[45px] border-r border-[#9b9b9b] bg-white pb-px font-bold text-black">
          Model
        </button>
        <button role="tab" aria-selected="false" className="w-[53px] border-r border-[#9b9b9b] bg-[#d4d4d4] pb-px">
          3D Views
        </button>
        <button role="tab" aria-selected="false" className="w-[84px] border-r border-[#9b9b9b] bg-[#d4d4d4] pr-1 pb-px">
          Motion Study 1
        </button>
      </div>
    </div>
  );
}

function StatusBar() {
  return (
    <footer className="flex h-[14px] items-center bg-[#f8f8f8] px-px text-[#222]">
      <span>Saves the active document.</span>
      <span className="ml-auto">Editing Part</span>
      <Icon name="warn" className="mr-[65px] ml-[22px] size-3" />
      <span>IPS</span>
      <svg viewBox="0 0 6 4" className="mx-[22px] h-[3px] w-[5px]" aria-hidden="true">
        <path d="M0 4H6L3 0Z" fill="#333" />
      </svg>
      <Icon name="tag" className="size-[13px]" />
    </footer>
  );
}

function TaskButton({ label, active, running, children }: { label: string; active?: boolean; running?: boolean; children: ReactNode }) {
  return (
    <button
      aria-label={label}
      className={`mx-[3px] flex items-center justify-center border-b-2 pt-px ${active ? "w-9 bg-[#3b4046]" : "w-[31px]"} ${
        running ? "border-[#76b9ed]" : "border-transparent"
      }`}
    >
      {children}
    </button>
  );
}

function Taskbar() {
  return (
    <div className="flex h-[31px] bg-[#050a12] text-white">
      <div className="flex">
        <TaskButton label="Start">
          <svg viewBox="0 0 14 14" className="size-[14px]" fill="#fff" aria-hidden="true">
            <path d="M0 2L6 1.200V6.500H0ZM6.700 1.100L13.500 0V6.500H6.700ZM0 7.300H6V12.600L0 11.800ZM6.700 7.300H13.500V13.800L6.700 12.700Z" />
          </svg>
        </TaskButton>
        <TaskButton label="Search">
          <Search size={14} strokeWidth={1.8} className="-scale-x-100" />
        </TaskButton>
        <TaskButton label="Task view">
          <svg viewBox="0 0 14 14" className="size-[14px]" fill="none" stroke="#ddd" aria-hidden="true">
            <path d="M1 4.500H9.500V9.500H1ZM1 1V2.500H9.500V1M1 13V11.500H9.500V13M12 1V13" />
            <path d="M11 5H13V7.500H11Z" fill="#fff" />
          </svg>
        </TaskButton>
        <span className="w-[3px]" />
        <TaskButton label="Print manager" running>
          <svg viewBox="0 0 14 14" className="size-[14px]" aria-hidden="true">
            <path d="M1.500 1L13 .5V7Q13 9 11 9.300L5 10V13.500H1.500Z" fill="#7bc043" />
            <path d="M1.500 1L5 4V13.500H1.500Z" fill="#39a14a" />
            <path d="M5.500 4L10.500 3.500L9.500 7L6 8Z" fill="#0a1a12" />
          </svg>
        </TaskButton>
        <TaskButton label="SOLIDWORKS 2020" active running>
          <svg viewBox="0 0 20 20" className="size-5" aria-hidden="true">
            <path d="M2 4L10 1L18 3V13L11 17L2 14Z" fill="#c5161d" />
            <path d="M2 4L10 1L18 3L10.500 5.500Z" fill="#e8474a" />
            <g fill="#fff" className="font-['Open_Sans',sans-serif]" fontWeight="700">
              <text x="2" y="13" fontSize="9">S</text>
              <text x="9" y="12" fontSize="9">W</text>
              <text x="4" y="19" fontSize="7">2020</text>
            </g>
          </svg>
        </TaskButton>
        <TaskButton label="File Explorer" running>
          <svg viewBox="0 0 18 15" className="h-[15px] w-[18px]" aria-hidden="true">
            <path d="M1 1H7L8.500 2.500H17V14H1Z" fill="#e9b845" />
            <path d="M1 4H17V14H1Z" fill="#fbdc81" />
            <path d="M4 15V9H14V15H11V11.500H7V15Z" fill="#3aa5e0" />
          </svg>
        </TaskButton>
        <TaskButton label="Chrome" running>
          <svg viewBox="0 0 18 18" className="size-[18px]" aria-hidden="true">
            <path d="M9 9L1.500 4.500A8.600 8.600 0 0 1 16.500 4.500Z" fill="#e33b2e" />
            <path d="M9 9L1.500 4.500A8.600 8.600 0 0 0 8.500 17.600L13 10Z" fill="#2fa24f" />
            <path d="M9 5H16.800A8.600 8.600 0 0 1 8.500 17.600L12.500 11Z" fill="#fbc61b" />
            <circle cx="9" cy="9" r="4.200" fill="#fff" />
            <circle cx="9" cy="9" r="3.300" fill="#4386f3" />
          </svg>
        </TaskButton>
      </div>
      <div className="ml-auto flex items-center">
        <button aria-label="People" className="mr-[16px]">
          <svg viewBox="0 0 14 14" className="size-[13px]" fill="none" stroke="#eee" strokeWidth="1.300" aria-hidden="true">
            <circle cx="5" cy="6" r="2.200" />
            <circle cx="10" cy="3" r="2.200" />
            <path d="M1 13.500Q1.500 8.500 5 8.500T8 11M8 6.500Q12.500 4.500 13 9.500" />
          </svg>
        </button>
        <button aria-label="Hidden icons" className="mr-[6px]">
          <ChevronUp size={14} />
        </button>
        <button aria-label="Network" className="mr-[5px]">
          <svg viewBox="0 0 14 14" className="size-[13px]" fill="none" stroke="#fff" aria-hidden="true">
            <path d="M4 3.500H13.500V10H4.500M6 12.500H12M9 10V12.500M.5 1.500H4V5.500H.5ZM2.200 5.500V12.500H4.500" />
          </svg>
        </button>
        <button aria-label="Volume" className="mr-2">
          <svg viewBox="0 0 14 14" className="size-[13px]" fill="none" stroke="#fff" aria-hidden="true">
            <path d="M1 5V9H3L6 12V2L3 5ZM8 5Q9.500 7 8 9M10 3.500Q12 7 10 10.500M12 2Q14.500 7 12 12" />
          </svg>
        </button>
        <div className="w-[42px] text-center leading-[14px] whitespace-nowrap">
          <div>10:04 PM</div>
          <div>6/10/2021</div>
        </div>
        <button aria-label="Notifications" className="mr-[19px] ml-[13px]">
          <svg viewBox="0 0 14 14" className="size-[13px]" fill="none" stroke="#fff" strokeWidth="1.200" aria-hidden="true">
            <path d="M1 1.500H13V10.500H9.500L7 13L6.500 10.500H1Z" />
          </svg>
        </button>
      </div>
    </div>
  );
}

export default function App() {
  return (
    <div className="flex h-screen flex-col overflow-hidden bg-[#f8f8f8] font-['Open_Sans','Noto_Sans',sans-serif] text-[9px] leading-3">
      <TitleBar />
      <Ribbon />
      <div className="flex min-h-0 flex-1 flex-col bg-white bg-[linear-gradient(to_bottom,transparent_53%,rgba(255,255,255,0.6)_62%,#fdfdfe_72%,#fdfdfe_85%,#f5f6f9),radial-gradient(44%_100%_at_83%_46%,#d5d9e5_0%,#dfe3ec_40%,transparent_100%),radial-gradient(60%_36%_at_24%_55%,#dde2ed_0%,transparent_100%)]">
        <RibbonTabs />
        <div className="flex min-h-0 flex-1">
          <FeatureTree />
          <Viewport />
        </div>
      </div>
      <BottomTabs />
      <StatusBar />
      <Taskbar />
    </div>
  );
}
